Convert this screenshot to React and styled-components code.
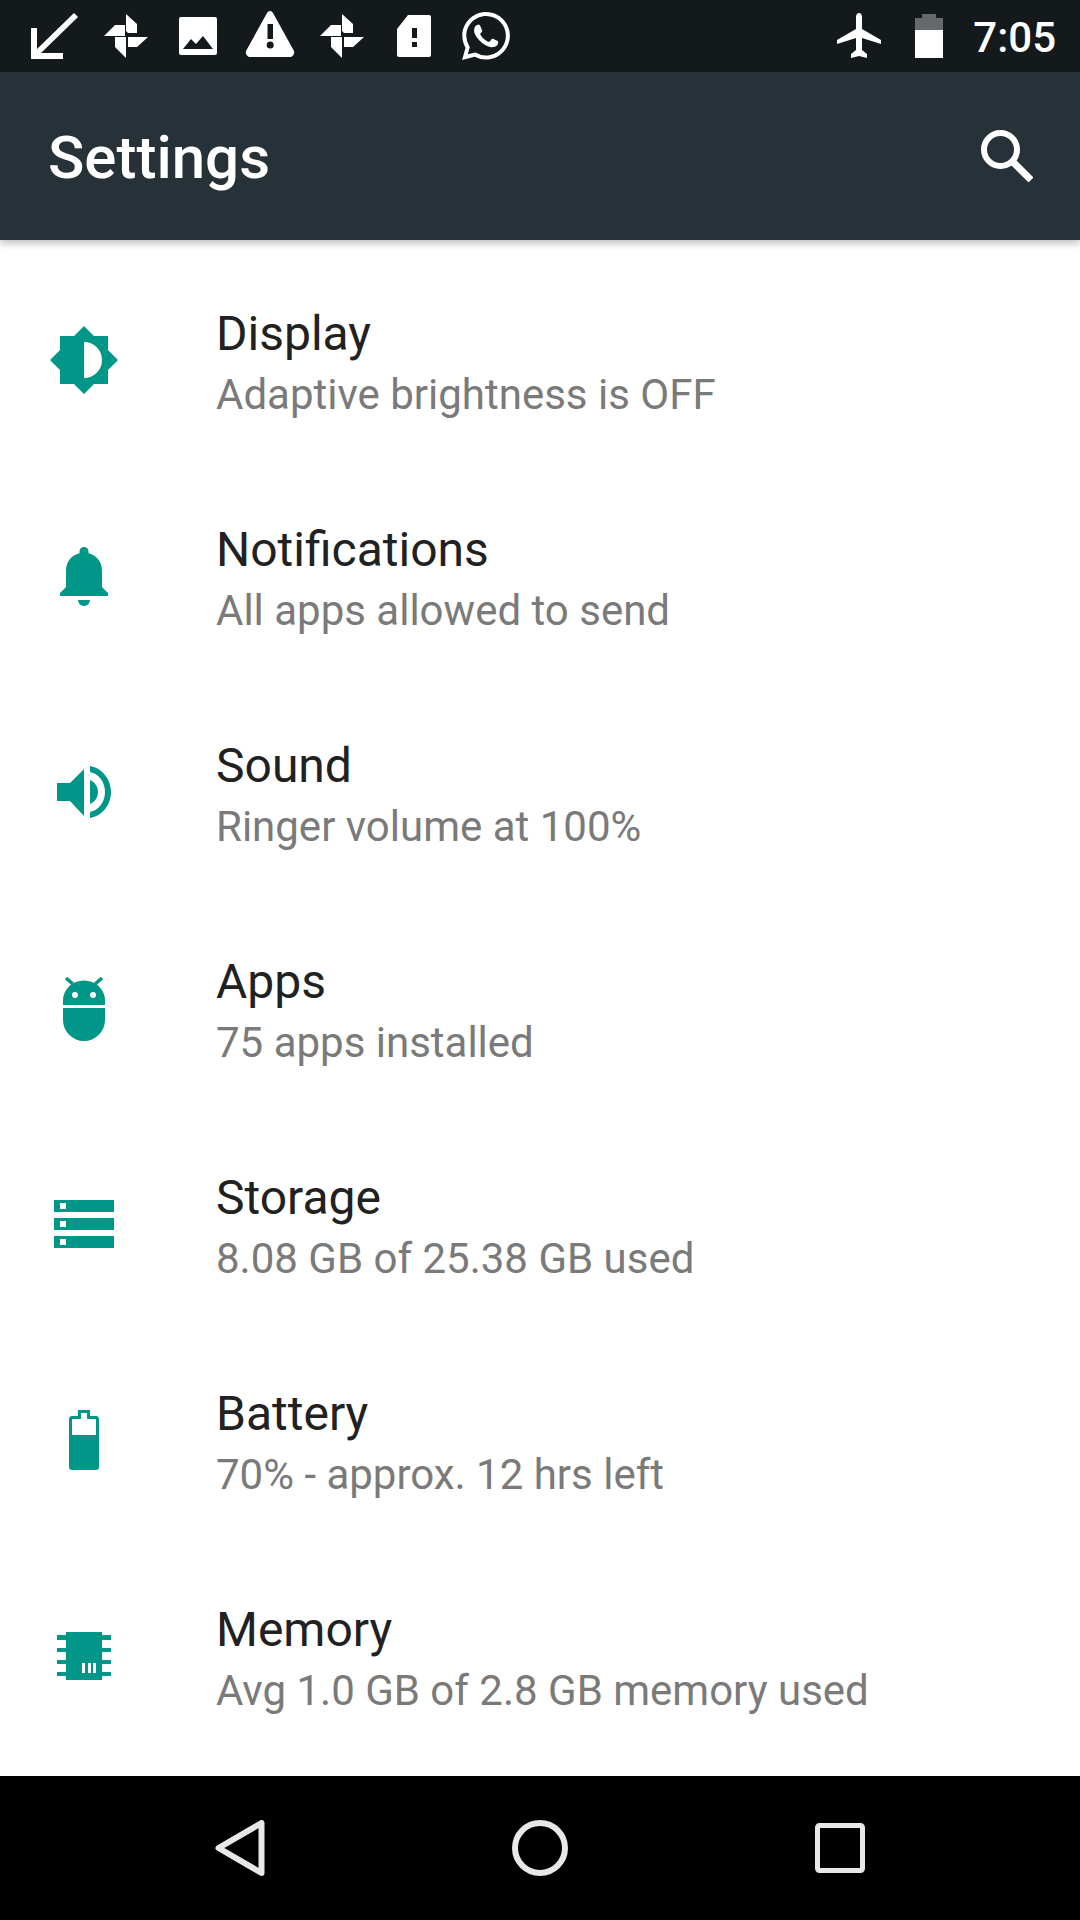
import React from 'react';
import styled, { createGlobalStyle } from 'styled-components';

const Global = createGlobalStyle`
  html, body { margin: 0; padding: 0; background: #fff; }
  #root { width: 1080px; height: 1920px; }
`;

const Screen = styled.div`
  width: 1080px;
  height: 1920px;
  display: flex;
  flex-direction: column;
  overflow: hidden;
  background: #fff;
  font-family: Roboto, "Liberation Sans", sans-serif;
`;

const StatusBar = styled.div`
  height: 72px;
  flex: none;
  background: #14191c;
  display: flex;
  align-items: center;
  justify-content: space-between;
  padding: 0 24px 0 18px;
  color: #fff;
`;

const StatusGroup = styled.div`
  display: flex;
  align-items: center;
  gap: ${(p) => p.$gap || 0}px;
`;

const StatusSlot = styled.div`
  width: 72px;
  display: flex;
  justify-content: center;
`;

const Clock = styled.span`
  font-size: 42px;
  font-weight: 500;
  line-height: 72px;
  padding-top: 4px;
`;

const AppBar = styled.header`
  position: relative;
  z-index: 1;
  height: 168px;
  flex: none;
  background: #263238;
  display: flex;
  align-items: center;
  justify-content: space-between;
  padding: 0 47px 0 48px;
  box-shadow: 0 3px 8px rgba(0, 0, 0, 0.28);
  color: #fff;
`;

const Title = styled.h1`
  margin: 4px 0 0;
  font-size: 60px;
  font-weight: 500;
  line-height: 72px;
`;

const List = styled.div`
  flex: 1;
  display: flex;
  flex-direction: column;
  padding-top: 12px;
`;

const Row = styled.div`
  height: 216px;
  flex: none;
  display: flex;
  align-items: center;
`;

const IconCell = styled.div`
  width: 168px;
  flex: none;
  display: flex;
  justify-content: center;
  color: #009688;
`;

const RowText = styled.div`
  margin-left: 48px;
  padding-top: 10px;
  display: flex;
  flex-direction: column;
`;

const RowTitle = styled.div`
  font-size: 48px;
  line-height: 60px;
  color: #212121;
`;

const RowSub = styled.div`
  font-size: 42px;
  line-height: 62px;
  color: #7a7a7a;
`;

const NavBar = styled.nav`
  height: 144px;
  flex: none;
  background: #000;
  display: grid;
  grid-template-columns: repeat(3, 300px);
  padding: 0 90px;
  align-items: center;
`;

const NavSlot = styled.div`
  display: flex;
  justify-content: center;
`;

const SvgBase = styled.svg`
  display: block;
  fill: currentColor;
`;

const Svg = ({ w, h = w, vb, children }) => (
  <SvgBase width={w} height={h} viewBox={vb || `0 0 ${w} ${h}`}>
    {children}
  </SvgBase>
);

const ArrowIcon = () => (
  <Svg w={47} h={46}>
    <path d="M0 15h6v21L43 0l4 4-37 36h22v6H0z" />
  </Svg>
);

const Pinwheel = () => (
  <Svg w={44} h={44}>
    <path d="M22 0l11 10v9h-9l-2-2zM0 22l11-11h10v11zM24 33V23h20L33 33zM11 23h11v21L11 33z" />
  </Svg>
);

const ImageIcon = () => (
  <Svg w={38} h={38}>
    <path fillRule="evenodd" d="M2 0h34a2 2 0 0 1 2 2v34a2 2 0 0 1-2 2H2a2 2 0 0 1-2-2V2a2 2 0 0 1 2-2zM4 32h30L24 19l-7 8-5-5z" />
  </Svg>
);

const Warning = () => (
  <Svg w={50} h={50}>
    <path fillRule="evenodd" d="M25 0q2 0 3 2l21 38q1 4-3 6H4q-4-2-3-6L22 2q1-2 3-2zM22.500 13v15h5.500V13zM25.200 30.500a3.500 3.500 0 1 0 0 7 3.500 3.500 0 0 0 0-7z" />
  </Svg>
);

const SimAlert = () => (
  <Svg w={34} h={42}>
    <path fillRule="evenodd" d="M11 0h21a2 2 0 0 1 2 2v38a2 2 0 0 1-2 2H2a2 2 0 0 1-2-2V14zM15 13v10h5V13zM15 27v5h5v-5z" />
  </Svg>
);

const WhatsApp = () => (
  <Svg w={48} h={48} vb="0 0 24 24">
    <path d="M17.500 14.400c-.3-.15-1.760-.87-2.030-.97-.27-.1-.47-.15-.67.15-.2.3-.77.97-.94 1.160-.17.2-.35.22-.64.08-.3-.15-1.260-.46-2.390-1.480-.88-.79-1.480-1.760-1.650-2.060-.17-.3-.02-.46.13-.61.13-.13.3-.35.45-.52.15-.17.2-.3.3-.5.1-.2.05-.37-.03-.52-.07-.15-.67-1.620-.92-2.220-.24-.58-.49-.5-.67-.51h-.57c-.2 0-.52.07-.79.37-.27.3-1.040 1.020-1.040 2.480s1.070 2.880 1.210 3.080c.15.2 2.100 3.200 5.080 4.490.71.3 1.260.49 1.690.62.710.23 1.360.2 1.870.12.57-.09 1.760-.72 2.010-1.420.25-.7.25-1.300.17-1.420-.07-.13-.27-.2-.57-.35zM12.050 21.790h-.01a9.870 9.870 0 0 1-5.030-1.380l-.36-.21-3.740.98 1-3.650-.24-.37a9.860 9.860 0 0 1-1.510-5.260c0-5.450 4.440-9.880 9.890-9.880 2.640 0 5.120 1.030 6.990 2.900a9.820 9.820 0 0 1 2.890 6.990c0 5.450-4.440 9.880-9.880 9.880zM20.460 3.490A11.820 11.820 0 0 0 12.050 0C5.490 0 .16 5.340.16 11.890c0 2.100.55 4.140 1.590 5.950L.06 24l6.300-1.650a11.880 11.880 0 0 0 5.680 1.450h.01c6.550 0 11.890-5.340 11.890-11.890 0-3.180-1.240-6.160-3.480-8.410z" />
  </Svg>
);

const Plane = () => (
  <Svg w={44} h={46}>
    <path d="M22 0c2 0 3 2 3 4v12l19 11v4l-19-6v12l5 4v4l-8-2-8 2v-4l5-4V25L0 31v-4l19-11V4c0-2 1-4 3-4z" />
  </Svg>
);

const BatteryStatus = () => (
  <Svg w={28} h={44}>
    <path d="M7 0h14v4h7v12H0V4h7z" opacity="0.35" />
    <path d="M0 16h28v28H0z" />
  </Svg>
);

const SearchIcon = () => (
  <Svg w={52} h={52}>
    <circle cx="19.500" cy="19.500" r="16.500" fill="none" stroke="currentColor" strokeWidth="6" />
    <path d="M31 31l19 19" stroke="currentColor" strokeWidth="7" />
  </Svg>
);

const Brightness = () => (
  <Svg w={68} h={68}>
    <path fillRule="evenodd" d="M34 0l10 10h14v14l10 10-10 10v14H44L34 68 24 58H10V44L0 34l10-10V10h14zM34 16v36a18 18 0 0 0 0-36z" />
  </Svg>
);

const Bell = () => (
  <Svg w={48} h={59}>
    <path d="M24 0a4.500 4.500 0 0 1 4.500 4.500v1.800C37 8.500 42 15 42 24v16l6 6v3H0v-3l6-6V24c0-9 5-15.500 13.500-17.700V4.500A4.500 4.500 0 0 1 24 0zM18 53h12a6 6 0 0 1-12 0z" />
  </Svg>
);

const Speaker = () => (
  <Svg w={54} h={52}>
    <path d="M0 17h13L27 3v47L13 35H0zM33 14c5 2 8 7 8 12s-3 10-8 12zM33 0c12 2 21 13 21 26s-9 24-21 26v-6c9-2 15-10 15-20S42 8 33 6z" />
  </Svg>
);

const Android = () => (
  <Svg w={42} h={65}>
    <path fillRule="evenodd" d="M0 29v-4.500a21 20 0 0 1 42 0V29zM12 16a3 3 0 1 0 0 6 3 3 0 0 0 0-6zM30 16a3 3 0 1 0 0 6 3 3 0 0 0 0-6z" />
    <path d="M3 2l8 7M39 2l-8 7" fill="none" stroke="currentColor" strokeWidth="3.500" />
    <path d="M0 32h42v12a21 21 0 0 1-42 0z" />
  </Svg>
);

const StorageIcon = () => (
  <Svg w={60} h={48}>
    <path fillRule="evenodd" d="M0 0h60v12H0zM6 3v6h6V3zM0 18h60v12H0zM6 21v6h6v-6zM0 36h60v12H0zM6 39v6h6v-6z" />
  </Svg>
);

const BatteryIcon = () => (
  <Svg w={30} h={60}>
    <path fillRule="evenodd" d="M9 0h12v6h6a3 3 0 0 1 3 3v48a3 3 0 0 1-3 3H3a3 3 0 0 1-3-3V9a3 3 0 0 1 3-3h6zM12 3v6H3v16h24V9h-9V3z" />
  </Svg>
);

const MemoryIcon = () => (
  <Svg w={54} h={48}>
    <path fillRule="evenodd" d="M9 0h36v48H9zM25 31v10h3V31zM31 31v10h3V31zM36 31v10h3V31z" />
    <path d="M0 3h9v5H0zM0 16h9v4H0zM0 28h9v4H0zM0 40h9v4H0zM45 3h9v5h-9zM45 16h9v4h-9zM45 28h9v4h-9zM45 40h9v4h-9z" />
  </Svg>
);

const NavBack = () => (
  <Svg w={50} h={56}>
    <path d="M46.500 3v50L3.500 28z" fill="none" stroke="#e8e8e8" strokeWidth="6" strokeLinejoin="round" />
  </Svg>
);

const NavHome = () => (
  <Svg w={56} h={56}>
    <circle cx="28" cy="28" r="25" fill="none" stroke="#e8e8e8" strokeWidth="6" />
  </Svg>
);

const NavRecent = () => (
  <Svg w={50} h={50}>
    <rect x="2.500" y="2.500" width="45" height="45" rx="2" fill="none" stroke="#e8e8e8" strokeWidth="5" />
  </Svg>
);

const statusIcons = [ArrowIcon, Pinwheel, ImageIcon, Warning, Pinwheel, SimAlert, WhatsApp];

const rows = [
  { icon: <Brightness />, title: 'Display', sub: 'Adaptive brightness is OFF' },
  { icon: <Bell />, title: 'Notifications', sub: 'All apps allowed to send' },
  { icon: <Speaker />, title: 'Sound', sub: 'Ringer volume at 100%' },
  { icon: <Android />, title: 'Apps', sub: '75 apps installed' },
  { icon: <StorageIcon />, title: 'Storage', sub: '8.08 GB of 25.38 GB used' },
  { icon: <BatteryIcon />, title: 'Battery', sub: '70% - approx. 12 hrs left' },
  { icon: <MemoryIcon />, title: 'Memory', sub: 'Avg 1.0 GB of 2.8 GB memory used' },
];

export default function App() {
  return (
    <Screen>
      <Global />
      <StatusBar>
        <StatusGroup>
          {statusIcons.map((Icon, i) => (
            <StatusSlot key={i}><Icon /></StatusSlot>
          ))}
        </StatusGroup>
        <StatusGroup $gap={30}>
          <StatusGroup $gap={34}>
            <Plane />
            <BatteryStatus />
          </StatusGroup>
          <Clock>7:05</Clock>
        </StatusGroup>
      </StatusBar>
      <AppBar>
        <Title>Settings</Title>
        <SearchIcon />
      </AppBar>
      <List>
        {rows.map((r) => (
          <Row key={r.title}>
            <IconCell>{r.icon}</IconCell>
            <RowText>
              <RowTitle>{r.title}</RowTitle>
              <RowSub>{r.sub}</RowSub>
            </RowText>
          </Row>
        ))}
      </List>
      <NavBar>
        <NavSlot><NavBack /></NavSlot>
        <NavSlot><NavHome /></NavSlot>
        <NavSlot><NavRecent /></NavSlot>
      </NavBar>
    </Screen>
  );
}
